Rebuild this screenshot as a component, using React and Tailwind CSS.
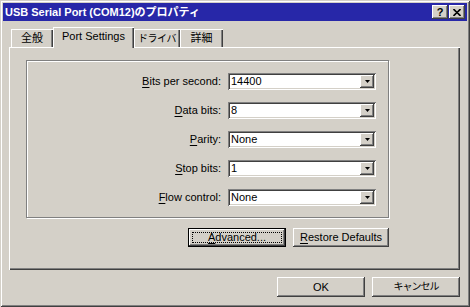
import React from "react";

const raised =
  "shadow-[inset_-1px_-1px_0_#404040,inset_1px_1px_0_#ffffff,inset_-2px_-2px_0_#808080]";

function Combo({ value }) {
  return (
    <div className="w-[148px] h-[17px] bg-white flex items-center shadow-[inset_1px_1px_0_#808080,inset_-1px_-1px_0_#ffffff,inset_2px_2px_0_#404040,inset_-2px_-2px_0_#d4d0c8] pl-[3px] pr-[2px]">
      <span className="flex-1 text-[11px] leading-none text-black">{value}</span>
      <div className={`w-[14px] h-[13px] bg-[#d4d0c8] flex items-center justify-center ${raised}`}>
        <svg width="5" height="3" viewBox="0 0 5 3">
          <path d="M0 0H5L2.5 3Z" fill="#000" />
        </svg>
      </div>
    </div>
  );
}

function Row({ label, ak, value }) {
  const rest = label.slice(1);
  return (
    <div className="flex items-center h-[17px]">
      <div className="w-[194px] text-right text-[11px] leading-none">
        <span className="underline underline-offset-[2px]">{ak}</span>
        {rest}
      </div>
      <div className="ml-[7px]">
        <Combo value={value} />
      </div>
    </div>
  );
}

function Tab({ label, w, active, cls = "text-[11px]" }) {
  return (
    <div
      className={`${w} flex items-center justify-center bg-[#d4d0c8] ${cls} leading-none shadow-[inset_1px_0_0_#ffffff,inset_0_1px_0_#ffffff,inset_-1px_0_0_#404040,inset_-2px_0_0_#808080] ${
        active ? "h-[21px] -mb-[1px] relative z-10 pb-[2px]" : "h-[18px] pt-[1px]"
      }`}
    >
      {label}
    </div>
  );
}

export default function App() {
  return (
    <div
      className="w-[470px] h-[307px] bg-[#d4d0c8] p-[3px] text-black shadow-[inset_1px_1px_0_#d4d0c8,inset_-1px_-1px_0_#404040,inset_2px_2px_0_#ffffff,inset_-2px_-2px_0_#808080]"
      style={{ fontFamily: '"Liberation Sans", "Noto Sans CJK JP", sans-serif' }}
    >
      <div className="h-[18px] bg-[#2727a8] flex items-center justify-between pl-[2px] pr-[2px]">
        <span className="text-white font-bold text-[11px] leading-none">
          USB Serial Port (COM12)のプロパティ
        </span>
        <div className="flex">
          <div className={`w-[16px] h-[14px] bg-[#d4d0c8] flex items-center justify-center font-bold text-[11px] leading-none ${raised}`}>
            ?
          </div>
          <div className={`ml-[1px] w-[16px] h-[14px] bg-[#d4d0c8] flex items-center justify-center ${raised}`}>
            <svg width="8" height="7" viewBox="0 0 8 7">
              <path d="M0.5 0L4 3.5L7.5 0M0.5 7L4 3.5L7.5 7" stroke="#000" strokeWidth="1.6" fill="none" />
            </svg>
          </div>
        </div>
      </div>

      <div className="pl-[6px] pr-[7px]">
        <div className="mt-[6px] h-[20px] flex items-end pl-[2px]">
          <Tab label="全般" w="w-[42px]" />
          <Tab label="Port Settings" w="w-[81px]" active />
          <Tab label="ドライバ" w="w-[46px]" cls="text-[10px] tracking-[-0.5px]" />
          <Tab label="詳細" w="w-[43px]" />
        </div>

        <div className="h-[223px] shadow-[inset_1px_1px_0_#ffffff,inset_-1px_-1px_0_#404040,inset_-2px_-2px_0_#808080] pl-[17px] pt-[13px]">
          <div className="w-[363px] h-[158px] border border-[#808080] shadow-[1px_1px_0_#ffffff,inset_1px_1px_0_#ffffff] flex flex-col gap-[12px] pt-[12px]">
            <Row label="Bits per second:" ak="B" value="14400" />
            <Row label="Data bits:" ak="D" value="8" />
            <Row label="Parity:" ak="P" value="None" />
            <Row label="Stop bits:" ak="S" value="1" />
            <Row label="Flow control:" ak="F" value="None" />
          </div>

          <div className="w-[363px] mt-[10px] flex justify-end gap-[7px]">
            <div className="w-[98px] h-[19px] border border-black">
              <div className={`w-full h-full bg-[#d4d0c8] p-[3px] ${raised}`}>
                <div className="w-full h-full border border-dotted border-black flex items-center justify-center text-[11px] leading-none">
                  <span>
                    <span className="underline underline-offset-[2px]">A</span>dvanced...
                  </span>
                </div>
              </div>
            </div>
            <div className={`w-[96px] h-[19px] bg-[#d4d0c8] flex items-center justify-center text-[11px] leading-none ${raised}`}>
              <span>
                <span className="underline underline-offset-[2px]">R</span>estore Defaults
              </span>
            </div>
          </div>
        </div>

        <div className="mt-[7px] flex justify-end gap-[7px]">
          <div className={`w-[88px] h-[20px] bg-[#d4d0c8] flex items-center justify-center text-[11px] leading-none ${raised}`}>
            OK
          </div>
          <div className={`w-[88px] h-[20px] bg-[#d4d0c8] flex items-center justify-center text-[10px] tracking-[-1px] leading-none ${raised}`}>
            キャンセル
          </div>
        </div>
      </div>
    </div>
  );
}
